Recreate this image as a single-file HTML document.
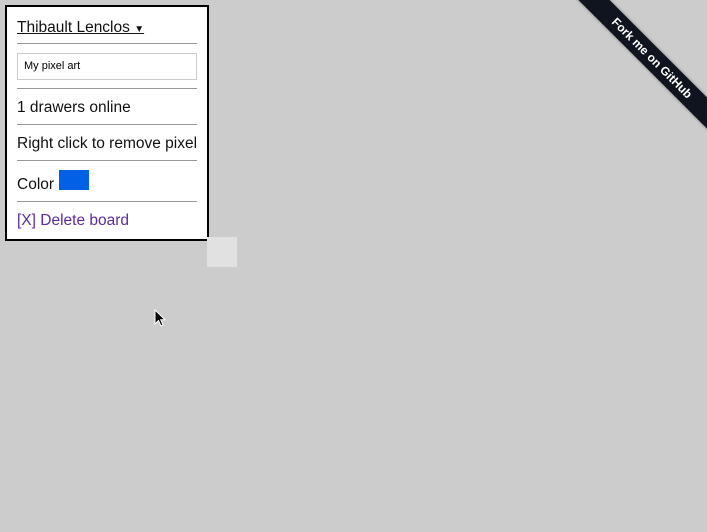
<!DOCTYPE html>
<html><head><style>
body{margin:0;width:707px;height:532px;background:#cccccc;position:relative;overflow:hidden;font-family:"Liberation Sans",sans-serif;}
.panel{position:absolute;left:5px;top:5px;width:200px;height:232px;background:#fff;border:2px solid #000;}
.t{position:absolute;left:10px;font-size:15.5px;color:#111;white-space:nowrap;}
.hr{position:absolute;left:10px;width:180px;height:1px;background:#999;}
.inp{position:absolute;left:10px;top:46px;border:1px solid #ccc;font-size:11px;line-height:25px;padding-left:6px;box-sizing:border-box;width:180px;height:27px;}
.sq{position:absolute;left:207px;top:237px;width:30px;height:30px;background:#e1e1e1;}
.rib{position:absolute;left:527px;top:47px;width:250px;height:22px;background:#10141f;transform:rotate(45deg);color:#fff;font-size:12px;font-weight:bold;text-align:center;line-height:22px;box-shadow:0 0 3px rgba(0,0,0,.4);}
</style></head><body>
<div class="panel">
<div class="t" style="top:12px;text-decoration:underline;">Thibault Lenclos <span style="font-size:10px">&#9660;</span></div>
<div class="hr" style="top:36px"></div>
<div class="inp">My pixel art</div>
<div class="hr" style="top:81px"></div>
<div class="t" style="top:92px">1 drawers online</div>
<div class="hr" style="top:117px"></div>
<div class="t" style="top:128px">Right click to remove pixel</div>
<div class="hr" style="top:153px"></div>
<div class="t" style="top:169px">Color</div>
<div style="position:absolute;left:52px;top:163px;width:30px;height:20px;background:#0061e6"></div>
<div class="hr" style="top:194px"></div>
<div class="t" style="top:205px;color:#5c2a9e">[X] Delete board</div>
</div>
<div class="sq"></div>
<div class="rib">Fork me on GitHub</div>
<svg style="position:absolute;left:154px;top:309px" width="14" height="20" viewBox="0 0 14 20"><path d="M1 1 L1 15 L4.5 11.5 L7 17 L9 16 L6.7 10.8 L11 10.8 Z" fill="#000" stroke="#fff" stroke-width="1"/></svg>
</body></html>
